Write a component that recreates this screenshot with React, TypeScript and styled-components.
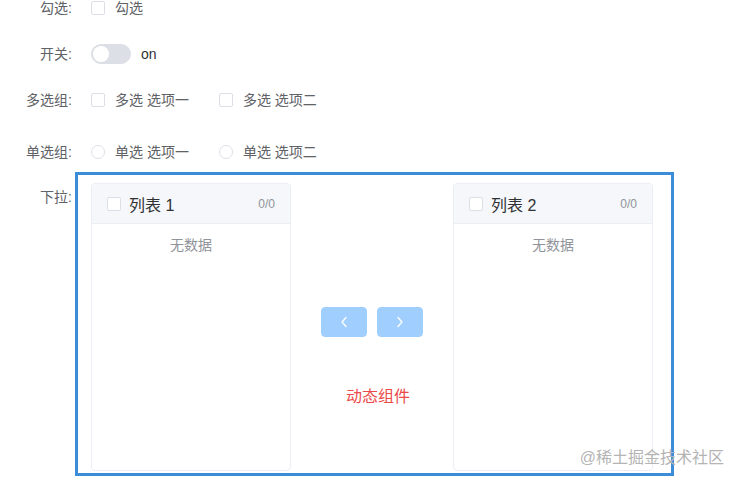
import React from "react";
import styled, { createGlobalStyle } from "styled-components";

const GlobalStyle = createGlobalStyle`
  html, body { margin: 0; padding: 0; background: #fff; }
  body {
    font-family: "Liberation Sans", "Noto Sans CJK SC", sans-serif;
    font-size: 14px;
    color: #606266;
  }
  * { box-sizing: border-box; }
`;

const Page = styled.div`
  position: relative;
  width: 739px;
  height: 483px;
  overflow: hidden;
`;

const Row = styled.div<{ $mt: number; $top?: boolean }>`
  display: flex;
  align-items: ${(p) => (p.$top ? "flex-start" : "center")};
  margin-top: ${(p) => p.$mt}px;
  min-height: 20px;
`;

const Label = styled.div<{ $pt?: number }>`
  width: 75px;
  flex-shrink: 0;
  text-align: right;
  padding-right: 3px;
  padding-top: ${(p) => p.$pt ?? 0}px;
  font-size: 14px;
  line-height: 20px;
  color: #606266;
`;

const Content = styled.div`
  display: flex;
  align-items: center;
  padding-left: 16px;
`;

const Option = styled.label`
  display: inline-flex;
  align-items: center;
  margin-right: 30px;
  font-size: 14px;
  line-height: 20px;
  color: #606266;
`;

const Box = styled.span<{ $round?: boolean }>`
  display: inline-block;
  width: 14px;
  height: 14px;
  border: 1px solid #dcdfe6;
  border-radius: ${(p) => (p.$round ? "50%" : "2px")};
  background: #fff;
  flex-shrink: 0;
`;

const OptionText = styled.span`
  padding-left: 10px;
`;

const Switch = styled.span`
  position: relative;
  display: inline-block;
  width: 40px;
  height: 20px;
  border-radius: 10px;
  background: #dcdfe6;
  border: 1px solid #dcdfe6;
  &::after {
    content: "";
    position: absolute;
    top: 1px;
    left: 1px;
    width: 16px;
    height: 16px;
    border-radius: 50%;
    background: #fff;
  }
`;

const SwitchText = styled.span`
  margin-left: 10px;
  font-size: 14px;
  line-height: 20px;
  color: #303133;
`;

const TransferBox = styled.div`
  display: flex;
  width: 599px;
  height: 304px;
  border: 3px solid #3c8dd8;
  padding: 8px 18px 2px 13px;
`;

const Panel = styled.div`
  width: 200px;
  height: 288px;
  border: 1px solid #ebeef5;
  border-radius: 4px;
  overflow: hidden;
  background: #fff;
  display: flex;
  flex-direction: column;
`;

const PanelHeader = styled.div`
  height: 40px;
  flex-shrink: 0;
  display: flex;
  align-items: center;
  padding: 0 15px;
  background: #f5f7fa;
  border-bottom: 1px solid #ebeef5;
`;

const PanelTitle = styled.span`
  margin-left: 8px;
  font-size: 16px;
  color: #303133;
`;

const PanelCount = styled.span`
  margin-left: auto;
  font-size: 12px;
  color: #909399;
`;

const Empty = styled.div`
  padding-top: 6px;
  height: 36px;
  line-height: 30px;
  text-align: center;
  font-size: 14px;
  color: #909399;
`;

const Middle = styled.div`
  width: 162px;
  flex-shrink: 0;
  padding: 0 30px;
  display: flex;
  flex-direction: column;
`;

const Buttons = styled.div`
  display: flex;
  gap: 10px;
  margin-top: 124px;
`;

const ArrowButton = styled.button`
  width: 46px;
  height: 30px;
  padding: 0;
  border: 1px solid #a0cfff;
  border-radius: 4px;
  background: #a0cfff;
  display: flex;
  align-items: center;
  justify-content: center;
  cursor: not-allowed;
`;

const Dynamic = styled.div`
  margin-top: 48px;
  padding-left: 12px;
  text-align: center;
  font-size: 16px;
  line-height: 24px;
  color: #eb4b4b;
`;

const Watermark = styled.div`
  position: absolute;
  right: 15px;
  top: 448px;
  font-size: 16px;
  line-height: 20px;
  color: #b4b4b4;
  z-index: 2;
`;

const Chevron: React.FC<{ dir: "left" | "right" }> = ({ dir }) => (
  <svg width="8" height="12" viewBox="0 0 8 12" fill="none">
    <polyline
      points={dir === "left" ? "6,1.5 2,6 6,10.5" : "2,1.5 6,6 2,10.5"}
      stroke="#fff"
      strokeWidth="1.3"
      strokeLinecap="round"
      strokeLinejoin="round"
    />
  </svg>
);

const TransferPanel: React.FC<{ title: string }> = ({ title }) => (
  <Panel>
    <PanelHeader>
      <Box />
      <PanelTitle>{title}</PanelTitle>
      <PanelCount>0/0</PanelCount>
    </PanelHeader>
    <Empty>无数据</Empty>
  </Panel>
);

export default function App() {
  return (
    <Page>
      <GlobalStyle />
      <Row $mt={-2}>
        <Label>勾选:</Label>
        <Content>
          <Option>
            <Box />
            <OptionText>勾选</OptionText>
          </Option>
        </Content>
      </Row>
      <Row $mt={26}>
        <Label>开关:</Label>
        <Content>
          <Switch />
          <SwitchText>on</SwitchText>
        </Content>
      </Row>
      <Row $mt={26}>
        <Label>多选组:</Label>
        <Content>
          <Option>
            <Box />
            <OptionText>多选 选项一</OptionText>
          </Option>
          <Option>
            <Box />
            <OptionText>多选 选项二</OptionText>
          </Option>
        </Content>
      </Row>
      <Row $mt={32}>
        <Label>单选组:</Label>
        <Content>
          <Option>
            <Box $round />
            <OptionText>单选 选项一</OptionText>
          </Option>
          <Option>
            <Box $round />
            <OptionText>单选 选项二</OptionText>
          </Option>
        </Content>
      </Row>
      <Row $mt={10} $top>
        <Label $pt={15}>下拉:</Label>
        <TransferBox>
          <TransferPanel title="列表 1" />
          <Middle>
            <Buttons>
              <ArrowButton>
                <Chevron dir="left" />
              </ArrowButton>
              <ArrowButton>
                <Chevron dir="right" />
              </ArrowButton>
            </Buttons>
            <Dynamic>动态组件</Dynamic>
          </Middle>
          <TransferPanel title="列表 2" />
        </TransferBox>
      </Row>
      <Watermark>@稀土掘金技术社区</Watermark>
    </Page>
  );
}
